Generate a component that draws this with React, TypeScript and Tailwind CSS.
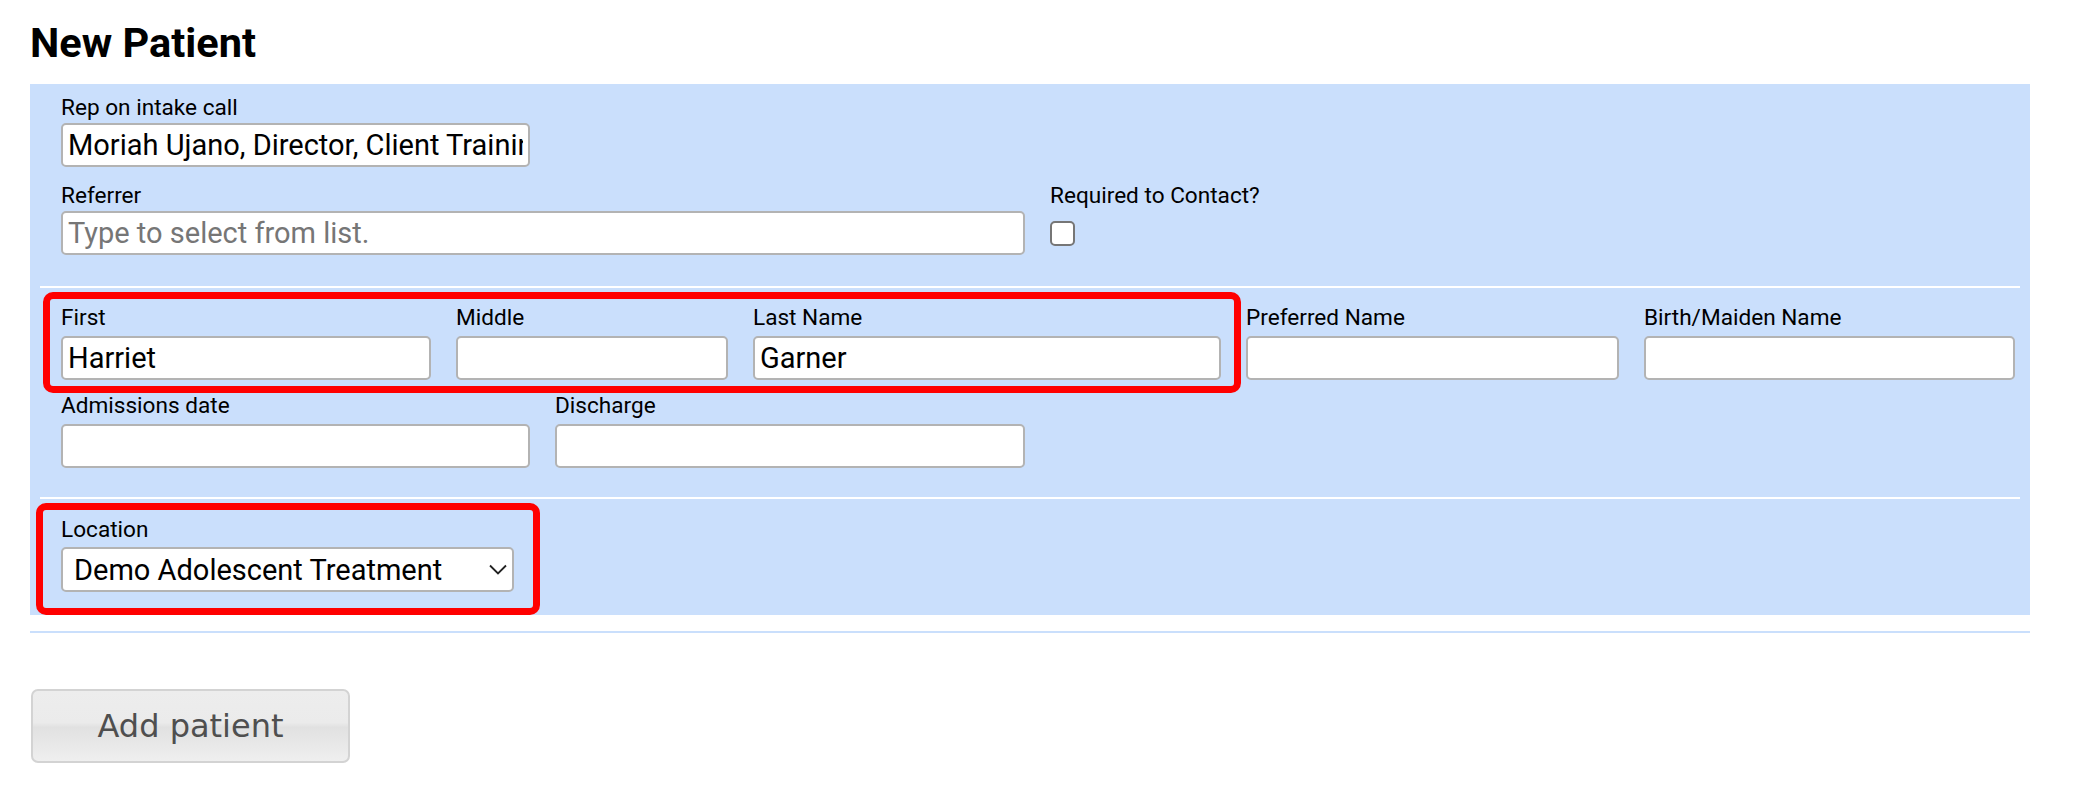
import React from "react";

const inputCls =
  "block w-full h-[44px] border-2 border-[#b3b3b3] rounded-[5px] bg-white px-[5px] text-[29px] leading-[32px] text-black outline-none font-['Roboto',sans-serif] placeholder:text-[#767676]";

function Label({ children, mb }: { children: React.ReactNode; mb: string }) {
  return (
    <div className={`text-[22.6px] leading-[26px] text-black whitespace-nowrap ${mb}`}>
      {children}
    </div>
  );
}

function Field({
  label,
  value,
  placeholder,
  width,
  mb = "mb-[5px]",
}: {
  label: string;
  value?: string;
  placeholder?: string;
  width: string;
  mb?: string;
}) {
  return (
    <div className={`${width} shrink-0`}>
      <Label mb={mb}>{label}</Label>
      <input className={inputCls} defaultValue={value} placeholder={placeholder} readOnly />
    </div>
  );
}

export default function App() {
  return (
    <div className="min-h-screen bg-white font-['Roboto',sans-serif] pt-[19px]">
      <div className="ml-[30px] w-[2000px]">
        <h1 className="text-[41.5px] leading-[48px] font-bold text-black mb-[17px]">New Patient</h1>

        <div className="border-b-2 border-[#cadffc] pb-[16px]">
          <div className="relative bg-[#cadffc] px-[10px] pb-[23px]">
            {/* Section 1 */}
            <div className="px-[21px] pt-[11px] pb-[31px] border-b-2 border-white">
              <Field
                label="Rep on intake call"
                value="Moriah Ujano, Director, Client Training"
                width="w-[469px]"
                mb="mb-[2px]"
              />
              <div className="flex gap-[25px] mt-[16px]">
                <Field
                  label="Referrer"
                  placeholder="Type to select from list."
                  width="w-[964px]"
                  mb="mb-[2px]"
                />
                <div className="shrink-0">
                  <Label mb="mb-[2px]">Required to Contact?</Label>
                  <div className="h-[44px] flex items-center">
                    <div className="w-[25px] h-[25px] rounded-[5px] border-2 border-[#767676] bg-white" />
                  </div>
                </div>
              </div>
            </div>

            {/* Section 2 */}
            <div className="px-[21px] pt-[17px] pb-[29px] border-b-2 border-white">
              <div className="flex gap-[25px]">
                <Field label="First" value="Harriet" width="w-[370px]" />
                <Field label="Middle" width="w-[272px]" />
                <Field label="Last Name" value="Garner" width="w-[468px]" />
                <Field label="Preferred Name" width="w-[373px]" />
                <Field label="Birth/Maiden Name" width="w-[371px]" />
              </div>
              <div className="flex gap-[25px] mt-[13px]">
                <Field label="Admissions date" width="w-[469px]" />
                <Field label="Discharge" width="w-[470px]" />
              </div>
            </div>

            {/* Section 3 */}
            <div className="px-[21px] pt-[18px]">
              <Label mb="mb-[4px]">Location</Label>
              <div className="relative w-[453px]">
                <select
                  className="appearance-none block w-full h-[45px] border-2 border-[#b3b3b3] rounded-[5px] bg-white pl-[11px] pr-[40px] text-[29px] text-black outline-none font-['Roboto',sans-serif]"
                  defaultValue="demo"
                >
                  <option value="demo">Demo Adolescent Treatment</option>
                </select>
                <svg
                  className="absolute right-[7px] top-[17px] pointer-events-none"
                  width="18"
                  height="11"
                  viewBox="0 0 18 11"
                  fill="none"
                >
                  <path d="M1 1.5 L9 9.5 L17 1.5" stroke="#222" strokeWidth="1.8" />
                </svg>
              </div>
            </div>

            {/* Annotation highlights */}
            <div className="absolute left-[13px] top-[208px] w-[1198px] h-[101px] border-[7px] border-[#ff0000] rounded-[10px] pointer-events-none" />
            <div className="absolute left-[6px] top-[419px] w-[504px] h-[112px] border-[7px] border-[#ff0000] rounded-[10px] pointer-events-none" />
          </div>
        </div>

        <button className="mt-[56px] ml-[1px] w-[319px] h-[74px] rounded-[7px] border-2 border-[#d3d3d3] bg-[linear-gradient(to_bottom,#ededed_0%,#ebebeb_45%,#e1e1e1_52%,#efefef_100%)] text-[32px] text-[#4f4f4f] font-['DejaVu_Sans',sans-serif]">
          Add patient
        </button>
      </div>
    </div>
  );
}
